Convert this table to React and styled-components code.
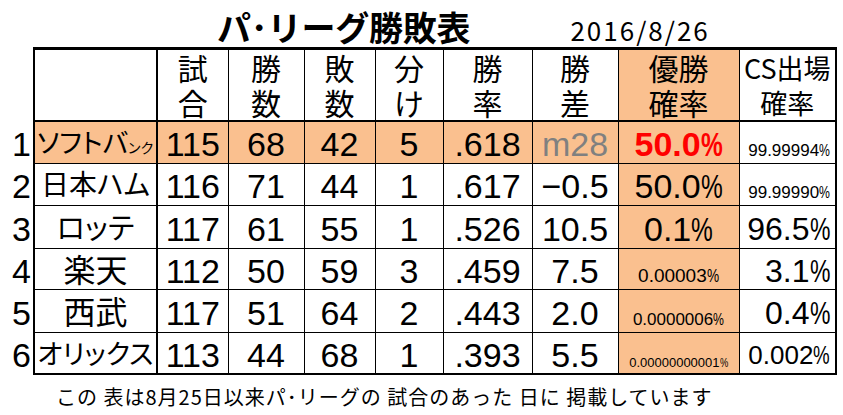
import React from "react";
import styled, { createGlobalStyle } from "styled-components";

const GlobalStyle = createGlobalStyle`
  body {
    margin: 0;
    background: #fff;
    color: #000;
    font-family: "Liberation Sans", Arial, sans-serif;
  }
`;

const ORANGE = "#fac08f";
const JP = `"Noto Sans CJK JP", "Noto Sans", sans-serif`;

const rows = [
  { rank: 1, name: "ソフトバ", tail: "ンク", nameSize: 27, g: 115, w: 68, l: 42, d: 5, pct: ".618", gb: "m28", win: "50.0", winSize: 34, cs: "99.99994", csSize: 17, top: true },
  { rank: 2, name: "日本ハム", nameSize: 28, g: 116, w: 71, l: 44, d: 1, pct: ".617", gb: "−0.5", win: "50.0", winSize: 34, cs: "99.99990", csSize: 17 },
  { rank: 3, name: "ロッテ", nameSize: 29, g: 117, w: 61, l: 55, d: 1, pct: ".526", gb: "10.5", win: "0.1", winSize: 34, cs: "96.5", csSize: 32 },
  { rank: 4, name: "楽天", nameSize: 32, g: 112, w: 50, l: 59, d: 3, pct: ".459", gb: "7.5", win: "0.00003", winSize: 19, cs: "3.1", csSize: 32 },
  { rank: 5, name: "西武", nameSize: 32, g: 117, w: 51, l: 64, d: 2, pct: ".443", gb: "2.0", win: "0.0000006", winSize: 17, cs: "0.4", csSize: 32 },
  { rank: 6, name: "オリックス", nameSize: 27, g: 113, w: 44, l: 68, d: 1, pct: ".393", gb: "5.5", win: "0.00000000001", winSize: 13, cs: "0.002", csSize: 26 },
];

const rowHeights = [42, 42, 43, 41, 43, 42];

const Percent = ({ value }) => (
  <>
    {value}
    <Pct>%</Pct>
  </>
);

export default function App() {
  return (
    <Page>
      <GlobalStyle />
      <TitleRow>
        <Title>パ･リーグ勝敗表</Title>
        <DateText>2016/8/26</DateText>
      </TitleRow>

      <Table>
        <colgroup>
          <col style={{ width: 34 }} />
          <col style={{ width: 123 }} />
          <col style={{ width: 71 }} />
          <col style={{ width: 76 }} />
          <col style={{ width: 71 }} />
          <col style={{ width: 68 }} />
          <col style={{ width: 89 }} />
          <col style={{ width: 86 }} />
          <col style={{ width: 121 }} />
          <col style={{ width: 97 }} />
        </colgroup>
        <thead>
          <HeadRow>
            <RankCell as="th" />
            <HeadCell $wide />
            <HeadCell>試<br />合</HeadCell>
            <HeadCell>勝<br />数</HeadCell>
            <HeadCell>敗<br />数</HeadCell>
            <HeadCell>分<br />け</HeadCell>
            <HeadCell>勝<br />率</HeadCell>
            <HeadCell>勝<br />差</HeadCell>
            <HeadCell $bg={ORANGE}>優勝<br />確率</HeadCell>
            <HeadCell $size={27} $last>CS出場<br />確率</HeadCell>
          </HeadRow>
        </thead>
        <tbody>
          {rows.map((r, i) => {
            const bg = r.top ? ORANGE : "#fff";
            const bottom = i === rows.length - 1;
            return (
              <BodyRow key={r.rank} style={{ height: rowHeights[i] }}>
                <RankCell>{r.rank}</RankCell>
                <NameCell $bg={bg} $bottom={bottom} $left={!!r.tail} $size={r.nameSize}>
                  {r.name}
                  {r.tail && <NameTail>{r.tail}</NameTail>}
                </NameCell>
                <NumCell $bg={bg} $bottom={bottom}>{r.g}</NumCell>
                <NumCell $bg={bg} $bottom={bottom}>{r.w}</NumCell>
                <NumCell $bg={bg} $bottom={bottom}>{r.l}</NumCell>
                <NumCell $bg={bg} $bottom={bottom}>{r.d}</NumCell>
                <NumCell $bg={bg} $bottom={bottom}>{r.pct}</NumCell>
                <NumCell $bg={bg} $bottom={bottom} $color={r.top ? "#808080" : "#000"}>
                  {r.gb}
                </NumCell>
                <NumCell
                  $bg={ORANGE}
                  $bottom={bottom}
                  $size={r.winSize}
                  $color={r.top ? "#ff0000" : "#000"}
                  $bold={r.top}
                >
                  <Percent value={r.win} />
                </NumCell>
                <NumCell $bottom={bottom} $last $align="right" $size={r.csSize}>
                  <Percent value={r.cs} />
                </NumCell>
              </BodyRow>
            );
          })}
        </tbody>
      </Table>

      <Note>この 表は8月25日以来パ･リーグの 試合のあった 日に 掲載しています</Note>
    </Page>
  );
}

const Page = styled.div`
  width: 843px;
  height: 415px;
  overflow: hidden;
  background: #fff;
`;

const TitleRow = styled.div`
  display: flex;
  align-items: flex-end;
  height: 47px;
  padding-left: 217px;
  gap: 100px;
`;

const Title = styled.h1`
  margin: 0;
  font-family: ${JP};
  font-size: 34px;
  font-weight: 700;
  line-height: 40px;
  letter-spacing: -0.2px;
`;

const DateText = styled.div`
  font-family: ${JP};
  font-size: 26px;
  line-height: 34px;
  letter-spacing: 2px;
`;

const Table = styled.table`
  width: 836px;
  table-layout: fixed;
  border-collapse: collapse;
`;

const HeadRow = styled.tr`
  height: 72px;
`;

const BodyRow = styled.tr``;

const HeadCell = styled.th`
  padding: 0;
  font-family: ${JP};
  font-weight: 400;
  font-size: ${(p) => p.$size || 30}px;
  line-height: 35px;
  text-align: center;
  vertical-align: middle;
  background: ${(p) => p.$bg || "#fff"};
  border: 1px solid #000;
  border-top: 3px solid #000;
  border-bottom: 2px solid #000;
  border-left-width: ${(p) => (p.$wide ? 2 : 1)}px;
  border-right-width: ${(p) => (p.$wide || p.$last ? 2 : 1)}px;
`;

const RankCell = styled.td`
  padding: 4px 2px 0 0;
  border: none;
  text-align: right;
  vertical-align: middle;
  font-size: 34px;
  line-height: 1;
`;

const NameCell = styled.td`
  padding: 0 0 0 ${(p) => (p.$left ? 2 : 0)}px;
  font-family: ${JP};
  font-size: ${(p) => p.$size || 30}px;
  line-height: 1.2;
  font-feature-settings: "palt";
  text-align: ${(p) => (p.$left ? "left" : "center")};
  white-space: nowrap;
  vertical-align: middle;
  background: ${(p) => p.$bg};
  border: 1px solid #000;
  border-left-width: 2px;
  border-right-width: 2px;
  border-bottom-width: ${(p) => (p.$bottom ? 2 : 1)}px;
`;

const NameTail = styled.span`
  font-size: 14px;
`;

const NumCell = styled.td`
  padding: ${(p) =>
    (p.$size || 34) < 25 ? "0 5px 4px" : "4px 5px 0"};
  font-size: ${(p) => p.$size || 34}px;
  font-weight: ${(p) => (p.$bold ? 700 : 400)};
  color: ${(p) => p.$color || "#000"};
  line-height: 1;
  white-space: nowrap;
  text-align: ${(p) => p.$align || "center"};
  vertical-align: ${(p) => ((p.$size || 34) < 25 ? "bottom" : "middle")};
  background: ${(p) => p.$bg || "#fff"};
  border: 1px solid #000;
  border-right-width: ${(p) => (p.$last ? 2 : 1)}px;
  border-bottom-width: ${(p) => (p.$bottom ? 2 : 1)}px;
`;

const Pct = styled.span`
  display: inline-block;
  transform: scaleX(0.72);
  transform-origin: left center;
  margin-right: -0.25em;
`;

const Note = styled.p`
  margin: 10px 0 0 56px;
  font-family: ${JP};
  font-size: 20px;
  line-height: 24px;
  letter-spacing: 1px;
`;
